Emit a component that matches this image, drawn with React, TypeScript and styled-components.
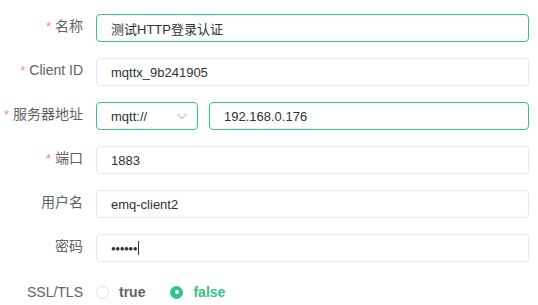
import React from "react";
import styled, { createGlobalStyle } from "styled-components";

const GlobalStyle = createGlobalStyle`
  body {
    margin: 0;
    background: #ffffff;
    font-family: "Liberation Sans", "Noto Sans CJK SC", sans-serif;
  }
`;

const GREEN = "#34c388";

const Form = styled.div`
  width: 538px;
  height: 305px;
  padding: 14px 9px 0 0;
  box-sizing: border-box;
  display: flex;
  flex-direction: column;
  gap: 16px;
  overflow: hidden;
`;

const Row = styled.div`
  display: grid;
  grid-template-columns: 83px 1fr;
  column-gap: 13px;
  align-items: start;
`;

const Label = styled.label<{ $offset?: number }>`
  text-align: right;
  font-size: 14px;
  line-height: 24px;
  margin-top: ${(p) => p.$offset ?? 0}px;
  color: #606266;
  white-space: nowrap;
`;

const Star = styled.span`
  color: #f78989;
  margin-right: 4px;
  font-size: 13px;
`;

const Field = styled.div<{ $focus?: boolean }>`
  height: 28px;
  box-sizing: border-box;
  border: 1px solid ${(p) => (p.$focus ? GREEN : "#e4e7ed")};
  border-radius: 4px;
  padding: 0 14px;
  display: flex;
  align-items: center;
  font-size: 13px;
  color: #303133;
  background: #fff;
`;

const Group = styled.div`
  display: flex;
  gap: 11px;
`;

const Select = styled(Field)`
  width: 102px;
  flex: none;
  justify-content: space-between;
  padding-right: 8px;
`;

const Grow = styled(Field)`
  flex: 1;
`;

const Dots = styled.span`
  font-size: 8px;
  letter-spacing: -0.5px;
  color: #303133;
`;

const Caret = styled.span`
  width: 1px;
  height: 14px;
  background: #303133;
  margin-left: 1px;
`;

const Radios = styled.div`
  display: flex;
  align-items: center;
  gap: 25px;
  height: 24px;
  margin-top: 2px;
`;

const Radio = styled.div<{ $on?: boolean }>`
  display: flex;
  align-items: center;
  gap: 10px;
  font-size: 14px;
  font-weight: bold;
  color: ${(p) => (p.$on ? GREEN : "#606266")};
`;

const Circle = styled.span<{ $on?: boolean }>`
  width: 13px;
  height: 13px;
  box-sizing: border-box;
  border-radius: 50%;
  border: 1px solid ${(p) => (p.$on ? GREEN : "#dcdfe6")};
  background: ${(p) => (p.$on ? GREEN : "#fff")};
  display: flex;
  align-items: center;
  justify-content: center;
  &::after {
    content: "";
    width: 4px;
    height: 4px;
    border-radius: 50%;
    background: #fff;
    display: ${(p) => (p.$on ? "block" : "none")};
  }
`;

const Chevron = () => (
  <svg width="14" height="14" viewBox="0 0 14 14">
    <path d="M2.5 5 L7 9.5 L11.5 5" fill="none" stroke="#c0c4cc" strokeWidth="1.2" />
  </svg>
);

export default function App() {
  return (
    <>
      <GlobalStyle />
      <Form>
        <Row>
          <Label><Star>*</Star>名称</Label>
          <Field $focus>测试HTTP登录认证</Field>
        </Row>
        <Row>
          <Label><Star>*</Star>Client ID</Label>
          <Field>mqttx_9b241905</Field>
        </Row>
        <Row>
          <Label><Star>*</Star>服务器地址</Label>
          <Group>
            <Select $focus>
              mqtt://
              <Chevron />
            </Select>
            <Grow $focus>192.168.0.176</Grow>
          </Group>
        </Row>
        <Row>
          <Label><Star>*</Star>端口</Label>
          <Field>1883</Field>
        </Row>
        <Row>
          <Label>用户名</Label>
          <Field>emq-client2</Field>
        </Row>
        <Row>
          <Label>密码</Label>
          <Field>
            <Dots>●●●●●●</Dots>
            <Caret />
          </Field>
        </Row>
        <Row>
          <Label $offset={2}>SSL/TLS</Label>
          <Radios>
            <Radio><Circle />true</Radio>
            <Radio $on><Circle $on />false</Radio>
          </Radios>
        </Row>
      </Form>
    </>
  );
}
